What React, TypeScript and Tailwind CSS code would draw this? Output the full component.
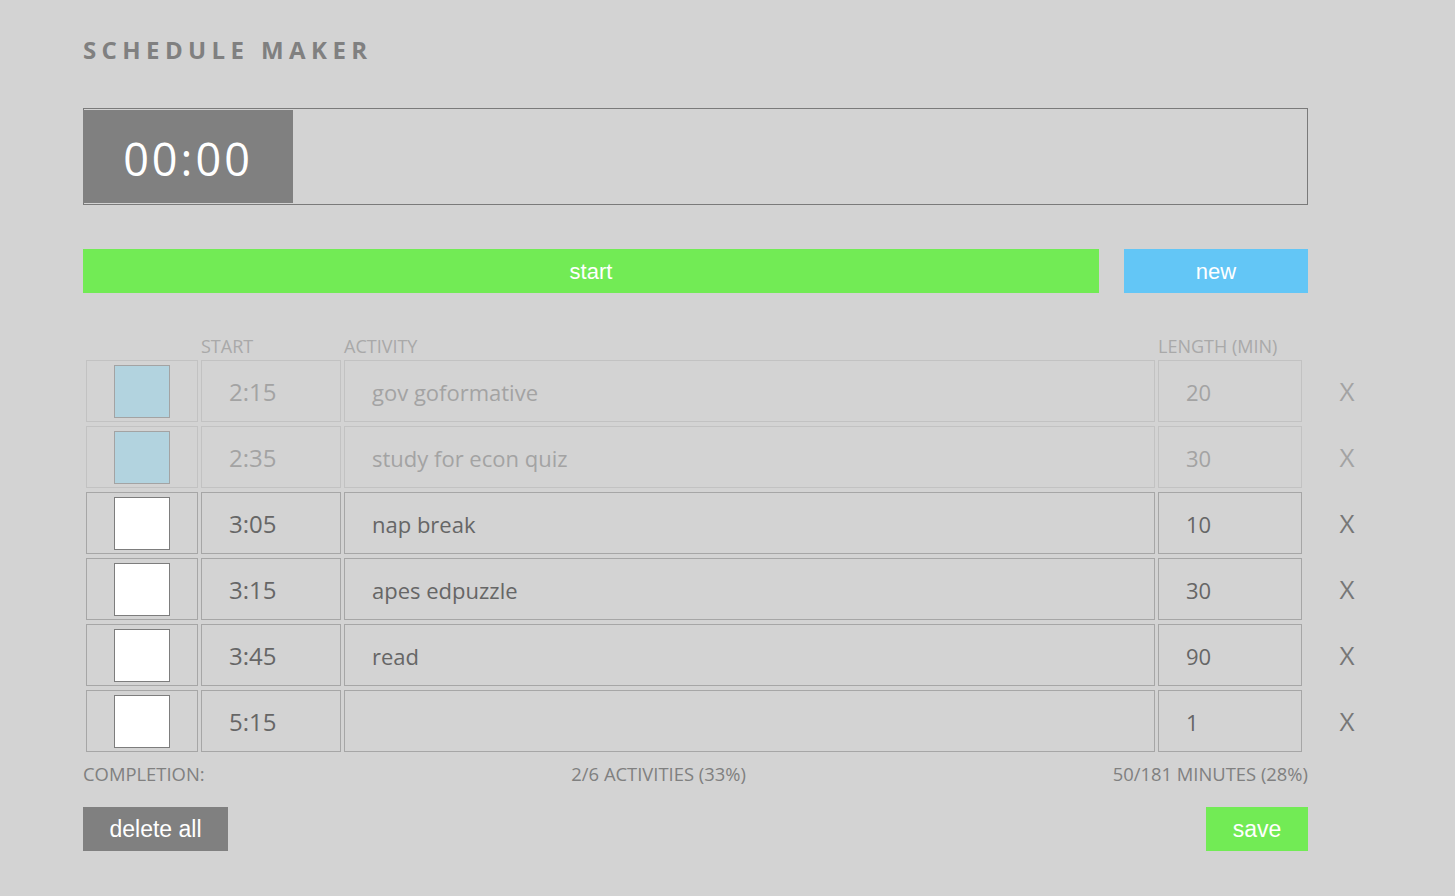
import React from "react";

type Activity = {
  done: boolean;
  start: string;
  name: string;
  length: number;
};

const activities: Activity[] = [
  { done: true, start: "2:15", name: "gov goformative", length: 20 },
  { done: true, start: "2:35", name: "study for econ quiz", length: 30 },
  { done: false, start: "3:05", name: "nap break", length: 10 },
  { done: false, start: "3:15", name: "apes edpuzzle", length: 30 },
  { done: false, start: "3:45", name: "read", length: 90 },
  { done: false, start: "5:15", name: "", length: 1 },
];

const sans = "font-['Open_Sans','Noto_Sans',sans-serif]";
const arial = "font-['Liberation_Sans',Arial,sans-serif]";

function Row({ item }: { item: Activity }) {
  const cell = item.done
    ? "shrink-0 border border-[#c2c2c2] text-[#a3a3a3]"
    : "shrink-0 border border-[#a6a6a6] text-[#666666]";

  return (
    <div className="flex items-stretch gap-[3px] h-[62px]">
      <div className={`${cell} w-[112px] flex items-center justify-center`}>
        <div
          className={
            item.done
              ? "w-[56px] h-[53px] bg-[#b2d3df] border border-[#a3a3a3]"
              : "w-[56px] h-[53px] bg-white border border-[#7d7d7d]"
          }
        />
      </div>
      <div className={`${cell} w-[140px] flex items-center pl-[27px] pt-[2px] text-[24px]`}>{item.start}</div>
      <div className={`${cell} w-[811px] flex items-center pl-[27px] pt-[2px] text-[22px]`}>{item.name}</div>
      <div className={`${cell} w-[144px] flex items-center pl-[27px] pt-[2px] text-[22px]`}>{item.length}</div>
      <div
        className={`shrink-0 w-[84px] flex items-center justify-center text-[26px] ${
          item.done ? "text-[#a3a3a3]" : "text-[#777777]"
        }`}
      >
        X
      </div>
    </div>
  );
}

export default function App() {
  return (
    <div className={`min-h-[896px] bg-[#d3d3d3] ${sans}`}>
      <div className="w-[1225px] ml-[83px] pt-[34px]">
        <h1 className="text-[24px] font-bold tracking-[5.4px] text-[#808080] leading-[32px]">SCHEDULE MAKER</h1>

        <div className="mt-[42px] h-[97px] border border-[#7a7a7a] flex py-px">
          <div className="w-[210px] -ml-px bg-[#808080] flex items-center justify-center pt-[4px] text-white text-[45px] tracking-[3px]">
            00:00
          </div>
        </div>

        <div className={`mt-[44px] flex gap-[25px] ${arial}`}>
          <button className="flex-1 h-[44px] bg-[#72eb55] text-white text-[22px]">start</button>
          <button className="w-[184px] h-[44px] bg-[#63c6f6] text-white text-[22px]">new</button>
        </div>

        <div className="mt-[43px] flex text-[18px] text-[#a9a9a9] leading-[20px] h-[24px]">
          <div className="w-[118px] shrink-0" />
          <div className="w-[143px] shrink-0">START</div>
          <div className="w-[814px] shrink-0">ACTIVITY</div>
          <div className="shrink-0 whitespace-nowrap">LENGTH (MIN)</div>
        </div>

        <div className="ml-[3px] flex flex-col gap-[4px]">
          {activities.map((item, i) => (
            <Row key={i} item={item} />
          ))}
        </div>

        <div className="mt-[10px] flex justify-between text-[18.4px] text-[#808080] leading-[24px]">
          <span>COMPLETION:</span>
          <span>2/6 ACTIVITIES (33%)</span>
          <span>50/181 MINUTES (28%)</span>
        </div>

        <div className={`mt-[21px] flex justify-between ${arial}`}>
          <button className="w-[145px] h-[44px] bg-[#808080] text-white text-[23px]">delete all</button>
          <button className="w-[102px] h-[44px] bg-[#72eb55] text-white text-[23px]">save</button>
        </div>
      </div>
    </div>
  );
}
